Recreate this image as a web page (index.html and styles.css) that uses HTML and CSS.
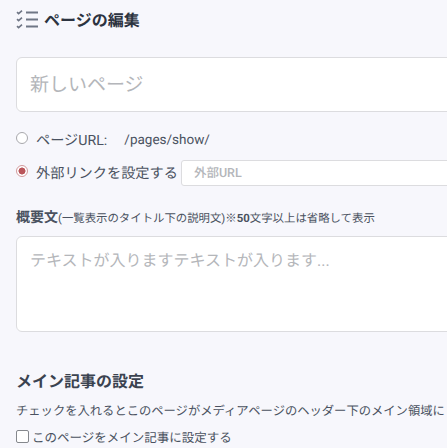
FILE: index.html
```html
<!DOCTYPE html>
<html lang="ja">
<head>
    <meta charset="UTF-8">
    <meta name="viewport" content="width=device-width, initial-scale=1.0">
    <title>ページの編集</title>
    <link rel="stylesheet" href="styles.css">
</head>
<body>
    <main class="editor">
        <h1 class="page-title">
            <svg class="title-icon" width="24" height="20" viewBox="0 0 24 20" fill="none" stroke="#6f7685">
                <path d="M1 3.2l1.6 1.5L6 1.6M1 10.2l1.6 1.5L6 8.6M1 17.2l1.6 1.5L6 15.6" stroke-width="1.6"/>
                <path d="M10 3.5h12M10 10.5h12M10 17.5h12" stroke-width="2"/>
            </svg>
            ページの編集
        </h1>

        <input class="title-input" type="text" placeholder="新しいページ">

        <div class="radio-row radio-row-first">
            <span class="radio"></span>
            <span class="radio-label">ページURL:</span>
            <span class="url-path">/pages/show/</span>
        </div>
        <div class="radio-row">
            <span class="radio radio-on"></span>
            <span class="radio-label">外部リンクを設定する</span>
            <input class="url-input" type="text" placeholder="外部URL">
        </div>

        <div class="summary-label"><b>概要文</b><span class="summary-note">(一覧表示のタイトル下の説明文)※<b>50</b>文字以上は省略して表示</span></div>
        <textarea class="summary-input" placeholder="テキストが入りますテキストが入ります..."></textarea>

        <h2 class="section-title">メイン記事の設定</h2>
        <p class="section-text">チェックを入れるとこのページがメディアページのヘッダー下のメイン領域に</p>
        <label class="check-row">
            <span class="checkbox"></span>
            このページをメイン記事に設定する
        </label>
    </main>
</body>
</html>
```

FILE: styles.css
```css
html, body {
    margin: 0;
    height: 448px;
    overflow: hidden;
    background: #f7f7fc;
}

body {
    font-family: Roboto, "Noto Sans CJK JP", sans-serif;
    color: #4a5260;
    text-rendering: geometricPrecision;
}

.editor {
    width: 640px;
    padding: 8px 0 0 16px;
    box-sizing: border-box;
}

.page-title {
    display: flex;
    align-items: center;
    gap: 4px;
    height: 22px;
    margin: 0 0 27px;
    font-size: 16px;
    font-weight: 700;
    color: #2c3340;
}

.title-input {
    display: block;
    width: 100%;
    height: 55px;
    padding: 0 13px;
    box-sizing: border-box;
    background: #fff;
    border: 1px solid #dcdcdf;
    border-radius: 6px;
    font-family: inherit;
    font-size: 19px;
    text-rendering: geometricPrecision;
}

.title-input::placeholder,
.summary-input::placeholder,
.url-input::placeholder {
    color: #b4b6ba;
    opacity: 1;
}

.radio-row {
    display: flex;
    align-items: center;
    height: 26px;
    font-size: 14.2px;
}

.radio-row-first {
    margin-top: 15px;
    margin-bottom: 7px;
}

.radio {
    width: 12px;
    height: 12px;
    margin-right: 8px;
    box-sizing: border-box;
    background: #fff;
    border: 1.5px solid #a8a8ac;
    border-radius: 50%;
    position: relative;
    top: -2px;
}

.radio-on {
    background: radial-gradient(circle, #b9555a 0 3.2px, #fff 3.8px);
    border-color: #d29a9c;
}

.radio-label {
    white-space: nowrap;
}

.url-path {
    margin-left: 17px;
    font-size: 13.5px;
}

.url-input {
    width: 420px;
    height: 26px;
    margin-left: 3px;
    padding: 0 12px;
    box-sizing: border-box;
    background: #fff;
    border: 1px solid #dcdcdf;
    border-radius: 3px;
    font-family: inherit;
    font-size: 12.5px;
    font-weight: 500;
    text-rendering: geometricPrecision;
}

.summary-label {
    margin-top: 21px;
    height: 22px;
    line-height: 22px;
    font-size: 14px;
    white-space: nowrap;
}

.summary-note {
    font-size: 11.4px;
}

.summary-input {
    display: block;
    width: 100%;
    height: 96px;
    margin-top: 7px;
    padding: 10px 13px;
    box-sizing: border-box;
    background: #fff;
    border: 1px solid #dcdcdf;
    border-radius: 6px;
    font-family: inherit;
    font-size: 16px;
    resize: none;
    text-rendering: geometricPrecision;
}

.section-title {
    margin: 39px 0 0;
    height: 22px;
    line-height: 22px;
    font-size: 16px;
    font-weight: 700;
    color: #3b4350;
}

.section-text {
    margin: 9px 0 0;
    height: 20px;
    line-height: 20px;
    font-size: 12.3px;
    white-space: nowrap;
}

.check-row {
    display: flex;
    align-items: center;
    gap: 3px;
    margin-top: 4px;
    height: 20px;
    font-size: 12.5px;
}

.checkbox {
    width: 13px;
    height: 13px;
    box-sizing: border-box;
    background: #fff;
    border: 1px solid #85888d;
    border-radius: 2px;
}
```
